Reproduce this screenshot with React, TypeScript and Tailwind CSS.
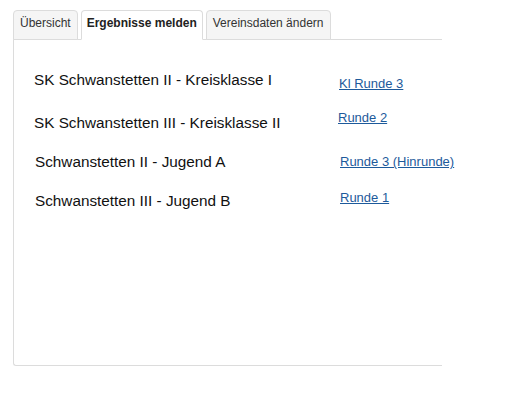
export default function App() {
  const tabs = [
    { label: 'Übersicht', active: false },
    { label: 'Ergebnisse melden', active: true },
    { label: 'Vereinsdaten ändern', active: false },
  ]

  const rows = [
    { team: 'SK Schwanstetten II - Kreisklasse I', link: 'Kl Runde 3', h: 'h-[39px]', teamCls: 'mt-0 ml-0', linkCls: 'mt-[5px] ml-[1px]' },
    { team: 'SK Schwanstetten III - Kreisklasse II', link: 'Runde 2', h: 'h-[43px]', teamCls: 'mt-[4px] ml-0', linkCls: 'mt-0 ml-0' },
    { team: 'Schwanstetten II - Jugend A', link: 'Runde 3 (Hinrunde)', h: 'h-[37px]', teamCls: 'mt-0 ml-[1px]', linkCls: 'mt-[1px] ml-[1px]' },
    { team: 'Schwanstetten III - Jugend B', link: 'Runde 1', h: 'h-[37px]', teamCls: 'mt-[2px] ml-[1px]', linkCls: 'mt-0 ml-[1px]' },
  ]

  return (
    <div className="min-h-[406px] bg-white pl-[13px] pt-[10px] font-['Liberation_Sans',Arial,sans-serif]">
      {/* Tabs */}
      <div className="flex gap-[3px]">
        {tabs.map((t) => (
          <div
            key={t.label}
            className={
              t.active
                ? 'relative z-10 -mb-px h-[30px] px-[5px] pt-[5px] text-[12px] leading-[15px] font-bold text-[#222] bg-white border border-[#dcdcdc] border-b-white rounded-t-[4px] whitespace-nowrap'
                : 'relative -mb-px h-[30px] px-[6px] pt-[5px] text-[12px] leading-[15px] text-[#333] bg-[#f5f5f5] border border-[#dcdcdc] rounded-t-[4px] whitespace-nowrap'
            }
          >
            {t.label}
          </div>
        ))}
      </div>

      {/* Panel */}
      <div className="w-[429px] h-[327px] border border-r-0 border-[#dcdcdc] rounded-bl-[3px] pt-[31px] pl-[20px]">
        {rows.map((r) => (
          <div key={r.team} className={`flex items-start ${r.h}`}>
            <div className={`w-[304px] shrink-0 text-[15.3px] leading-[18px] text-[#111] whitespace-nowrap ${r.teamCls}`}>{r.team}</div>
            <a href="#" className={`shrink-0 whitespace-nowrap text-[13px] leading-[15px] text-[#1d5a9b] underline ${r.linkCls}`}>
              {r.link}
            </a>
          </div>
        ))}
      </div>
    </div>
  )
}
